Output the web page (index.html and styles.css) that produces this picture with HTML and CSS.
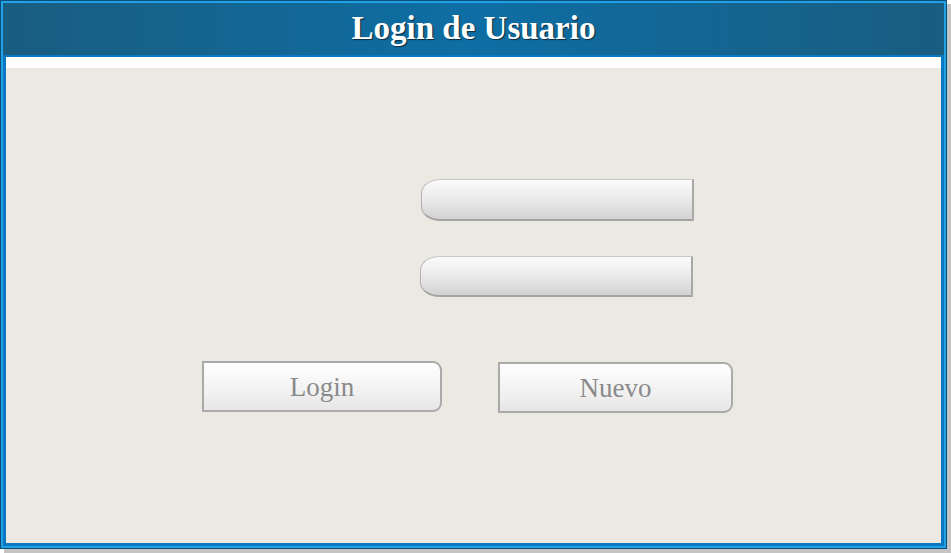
FILE: index.html
```html
<!DOCTYPE html>
<html lang="es">
<head>
<meta charset="utf-8">
<title>Login de Usuario</title>
<link rel="stylesheet" href="styles.css">
</head>
<body>
<div class="window">
  <div class="header"><h1 class="title">Login de Usuario</h1></div>
  <div class="content">
    <div class="strip"></div>
    <div class="main">
      <input class="field field-user" type="text" aria-label="Usuario">
      <input class="field field-pass" type="password" aria-label="Contraseña">
      <div class="buttons">
        <button class="btn btn-login" type="button">Login</button>
        <button class="btn btn-new" type="button">Nuevo</button>
      </div>
    </div>
  </div>
</div>
</body>
</html>
```
FILE: styles.css
```css
html, body {
  margin: 0;
  padding: 0;
  background: #ffffff;
}
body {
  box-sizing: border-box;
  min-height: 553px;
  padding: 0 4px 4px 0;
}
.window {
  box-sizing: border-box;
  width: 947px;
  height: 549px;
  border: 1px solid #0c4e7a;
  padding: 2px;
  background: #22a0e6;
  box-shadow: 4px 4px 0 #c4c4c4;
  display: flex;
  flex-direction: column;
}
.header {
  height: 52px;
  flex: none;
  border-bottom: 2px solid #0b78c2;
  background: linear-gradient(to right, #195d80 0%, #0e6ea4 50%, #195d80 100%);
  display: flex;
  align-items: center;
  justify-content: center;
}
.title {
  margin: 0;
  font-family: "Liberation Serif", "Times New Roman", serif;
  font-weight: bold;
  font-size: 33px;
  color: #ffffff;
  text-shadow: 1px 1px 1px #0a2a40;
  line-height: 1;
  position: relative;
  top: -1px;
}
.content {
  flex: 1;
  display: flex;
  flex-direction: column;
  border: 3px solid #0b78c2;
  border-top: 0;
  background: #ece9e2;
}
.strip {
  height: 11px;
  background: #ffffff;
  flex: none;
}
.main {
  flex: 1;
  padding-top: 111px;
  display: flex;
  flex-direction: column;
  align-items: flex-start;
}
.field {
  box-sizing: border-box;
  display: block;
  width: 273px;
  height: 42px;
  margin: 0;
  padding: 0 10px;
  border: 1px solid #b0b0b0;
  border-top-color: #c8c8c8;
  border-right: 2px solid #a8a8a8;
  border-bottom: 2px solid #a4a4a4;
  border-radius: 20px 0 0 20px / 14px 0 0 14px;
  background: linear-gradient(to bottom, #fbfbfb 0%, #ececec 45%, #d2d2d2 100%);
  outline: none;
}
.field-user {
  margin-left: 415px;
}
.field-pass {
  margin-left: 414px;
  margin-top: 35px;
  height: 41px;
}
.buttons {
  display: flex;
  gap: 56px;
  margin-left: 196px;
  margin-top: 64px;
}
.btn {
  box-sizing: border-box;
  height: 51px;
  border: 2px solid #aaaaaa;
  border-radius: 0 9px 9px 0;
  background: linear-gradient(to bottom, #ffffff 0%, #f1f1f1 60%, #e6e6e6 100%);
  font-family: "Liberation Serif", "Times New Roman", serif;
  font-size: 27px;
  color: #8a8a8a;
  padding: 2px 0 0;
  cursor: pointer;
}
.btn-login {
  width: 240px;
}
.btn-new {
  width: 235px;
  margin-top: 1px;
}
```
